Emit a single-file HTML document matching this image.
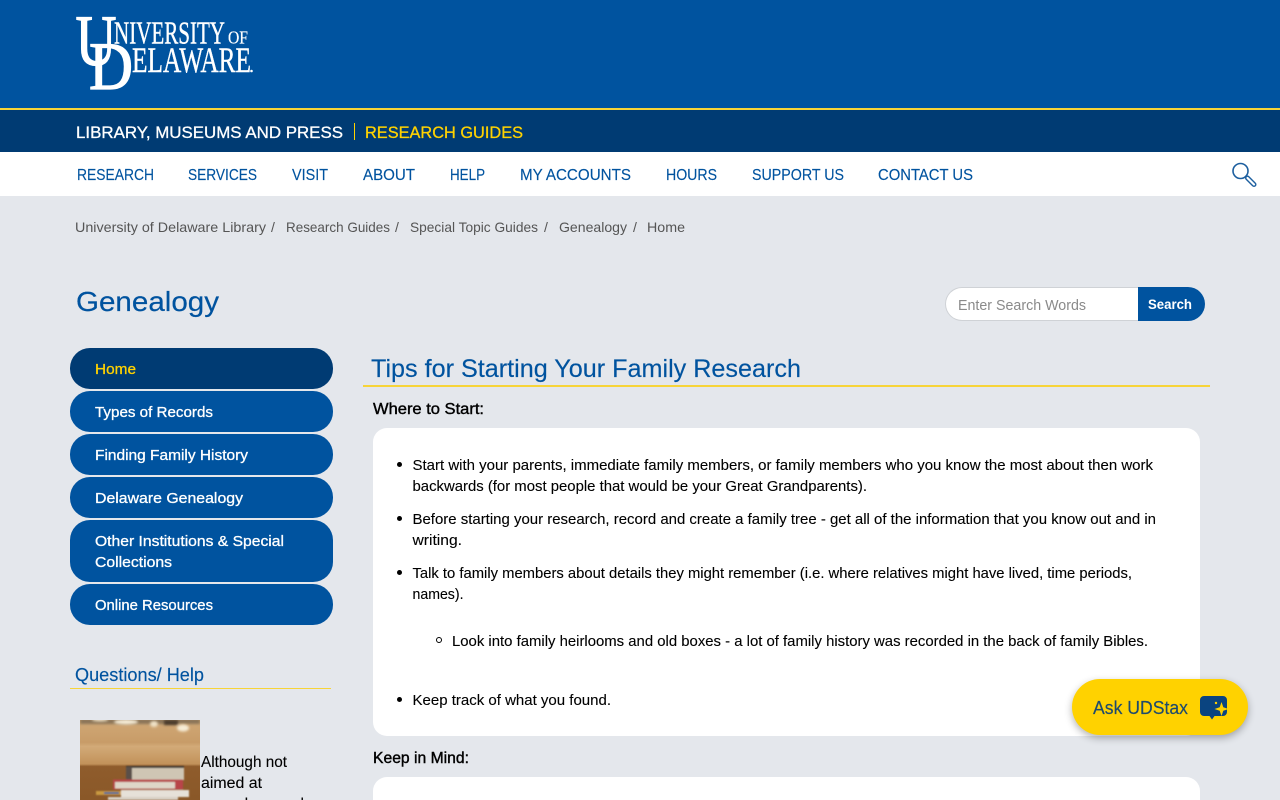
<!DOCTYPE html>
<html lang="en"><head><meta charset="utf-8"><title>Genealogy - Research Guides</title>
<style>
html,body{margin:0;padding:0;width:1280px;height:800px;overflow:hidden;background:#e4e7ec}
body{position:relative;font-family:"Liberation Sans",sans-serif}
.b{position:absolute;display:block}
svg.o{position:absolute;left:0;top:0}
text{font-family:"Liberation Sans",sans-serif}
text.s{font-family:"Liberation Serif",serif}
</style></head><body>
<div class="b" style="left:0;top:0;width:1280px;height:108px;background:#00539f"></div>
<div class="b" style="left:0;top:108px;width:1280px;height:2px;background:#f7d438"></div>
<div class="b" style="left:0;top:110px;width:1280px;height:42px;background:#003b73"></div>
<div class="b" style="left:0;top:152px;width:1280px;height:44px;background:#fff"></div>
<div class="b" style="left:354px;top:123px;width:1px;height:17px;background:#ffd200"></div>
<div class="b" style="left:945px;top:287px;width:193px;height:32px;background:#fff;border:1px solid #cfd2d6;border-right:0;border-radius:17px 0 0 17px"></div>
<div class="b" style="left:1138px;top:287px;width:67px;height:34px;background:#00539f;border-radius:0 17px 17px 0"></div>
<div class="b" style="left:70px;top:348px;width:263px;height:41px;background:#003b73;border-radius:20px"></div>
<div class="b" style="left:70px;top:391px;width:263px;height:41px;background:#00539f;border-radius:20px"></div>
<div class="b" style="left:70px;top:434px;width:263px;height:41px;background:#00539f;border-radius:20px"></div>
<div class="b" style="left:70px;top:477px;width:263px;height:41px;background:#00539f;border-radius:20px"></div>
<div class="b" style="left:70px;top:520px;width:263px;height:62px;background:#00539f;border-radius:20px"></div>
<div class="b" style="left:70px;top:584px;width:263px;height:41px;background:#00539f;border-radius:20px"></div>
<div class="b" style="left:70px;top:688px;width:261px;height:1px;background:#f7d438"></div>
<div class="b" style="left:363px;top:385px;width:847px;height:2px;background:#f7d438"></div>
<div class="b" style="left:373px;top:428px;width:827px;height:308px;background:#fff;border-radius:14px"></div>
<div class="b" style="left:373px;top:777px;width:827px;height:40px;background:#fff;border-radius:14px"></div>
<div class="b" style="left:397px;top:462px;width:5px;height:5px;background:#000;border-radius:50%"></div>
<div class="b" style="left:397px;top:516px;width:5px;height:5px;background:#000;border-radius:50%"></div>
<div class="b" style="left:397px;top:570px;width:5px;height:5px;background:#000;border-radius:50%"></div>
<div class="b" style="left:397px;top:697px;width:5px;height:5px;background:#000;border-radius:50%"></div>
<div class="b" style="left:436px;top:637px;width:4px;height:4px;border:1px solid #000;border-radius:50%"></div>
<div class="b" style="left:1072px;top:679px;width:176px;height:56px;background:#ffd200;border-radius:28px;box-shadow:0 3px 8px rgba(0,0,0,.3)"></div>

<svg class="o" width="1280" height="800" viewBox="0 0 1280 800" xmlns="http://www.w3.org/2000/svg">
<!-- logo -->
<g fill="#fff" stroke="#fff">
<text class="s" x="75.500" y="65" font-size="72" stroke-width="1.200" textLength="41" lengthAdjust="spacingAndGlyphs">U</text>
<text class="s" x="89" y="89" font-size="68" stroke-width="1.200" textLength="44" lengthAdjust="spacingAndGlyphs">D</text>
<text class="s" x="114" y="43.500" font-size="32" stroke-width=".4" textLength="111" lengthAdjust="spacingAndGlyphs">NIVERSITY</text>
<text class="s" x="228" y="43.500" font-size="18" stroke-width=".2" textLength="20" lengthAdjust="spacingAndGlyphs">OF</text>
<text class="s" x="132" y="72" font-size="36" stroke-width=".4" textLength="119" lengthAdjust="spacingAndGlyphs">ELAWARE</text>
<circle cx="251.500" cy="71" r="1.300" stroke="none"/>
</g>
<!-- blue bar -->
<g font-size="17" font-weight="500" stroke-width=".3">
<text x="76" y="138" fill="#fff" stroke="#fff" textLength="267" lengthAdjust="spacingAndGlyphs">LIBRARY, MUSEUMS AND PRESS</text>
<text x="365" y="138" fill="#ffd200" stroke="#ffd200" textLength="158" lengthAdjust="spacingAndGlyphs">RESEARCH GUIDES</text>
</g>
<!-- nav -->
<g font-size="16" fill="#00539f" stroke="#00539f" stroke-width=".15">
<text x="77" y="180" textLength="77" lengthAdjust="spacingAndGlyphs">RESEARCH</text>
<text x="188" y="180" textLength="69" lengthAdjust="spacingAndGlyphs">SERVICES</text>
<text x="292" y="180" textLength="36" lengthAdjust="spacingAndGlyphs">VISIT</text>
<text x="363" y="180" textLength="52" lengthAdjust="spacingAndGlyphs">ABOUT</text>
<text x="450" y="180" textLength="35" lengthAdjust="spacingAndGlyphs">HELP</text>
<text x="520" y="180" textLength="111" lengthAdjust="spacingAndGlyphs">MY ACCOUNTS</text>
<text x="666" y="180" textLength="51" lengthAdjust="spacingAndGlyphs">HOURS</text>
<text x="752" y="180" textLength="92" lengthAdjust="spacingAndGlyphs">SUPPORT US</text>
<text x="878" y="180" textLength="95" lengthAdjust="spacingAndGlyphs">CONTACT US</text>
</g>
<g fill="none">
<circle cx="1240.500" cy="171" r="7.500" stroke="#1d5f9f" stroke-width="1.600"/>
<path d="M1247.500 178l6.500 6.500" stroke="#1d5f9f" stroke-width="5" stroke-linecap="round"/>
<path d="M1247.500 178l6.500 6.500" stroke="#fff" stroke-width="2.200" stroke-linecap="round"/>
</g>
<!-- breadcrumb -->
<g font-size="14" fill="#555">
<text x="75" y="232" textLength="191" lengthAdjust="spacingAndGlyphs">University of Delaware Library</text>
<text x="271" y="232">/</text>
<text x="286" y="232" textLength="104" lengthAdjust="spacingAndGlyphs">Research Guides</text>
<text x="395" y="232">/</text>
<text x="410" y="232" textLength="128" lengthAdjust="spacingAndGlyphs">Special Topic Guides</text>
<text x="544" y="232">/</text>
<text x="559" y="232" textLength="68" lengthAdjust="spacingAndGlyphs">Genealogy</text>
<text x="633" y="232">/</text>
<text x="647" y="232" textLength="38" lengthAdjust="spacingAndGlyphs">Home</text>
</g>
<text x="76" y="311" font-size="28" fill="#00539f" stroke="#00539f" stroke-width=".2" textLength="143" lengthAdjust="spacingAndGlyphs">Genealogy</text>
<text x="958" y="310" font-size="14.500" fill="#8a8a8a" textLength="128" lengthAdjust="spacingAndGlyphs">Enter Search Words</text>
<text x="1148" y="309" font-size="14" font-weight="bold" fill="#fff" textLength="44" lengthAdjust="spacingAndGlyphs">Search</text>
<!-- side nav -->
<g font-size="15" fill="#fff" stroke="#fff" stroke-width=".3">
<text x="95" y="374" fill="#ffd200" stroke="#ffd200" textLength="41" lengthAdjust="spacingAndGlyphs">Home</text>
<text x="95" y="417" textLength="118" lengthAdjust="spacingAndGlyphs">Types of Records</text>
<text x="95" y="460" textLength="153" lengthAdjust="spacingAndGlyphs">Finding Family History</text>
<text x="95" y="503" textLength="148" lengthAdjust="spacingAndGlyphs">Delaware Genealogy</text>
<text x="95" y="546" textLength="189" lengthAdjust="spacingAndGlyphs">Other Institutions &amp; Special</text>
<text x="95" y="567" textLength="77" lengthAdjust="spacingAndGlyphs">Collections</text>
<text x="95" y="610" textLength="118" lengthAdjust="spacingAndGlyphs">Online Resources</text>
</g>
<text x="75" y="681" font-size="18.500" fill="#00539f" stroke="#00539f" stroke-width=".15" textLength="129" lengthAdjust="spacingAndGlyphs">Questions/ Help</text>
<!-- book photo -->
<defs>
<linearGradient id="w" x1="0" y1="0" x2="0" y2="1"><stop offset="0" stop-color="#d0a876"/><stop offset=".28" stop-color="#c89c68"/><stop offset=".33" stop-color="#d2aa78"/><stop offset=".55" stop-color="#c2925a"/><stop offset=".58" stop-color="#8f5c2c"/><stop offset="1" stop-color="#8a5828"/></linearGradient>
<filter id="bl" x="-20%" y="-20%" width="140%" height="140%"><feGaussianBlur stdDeviation=".7"/></filter>
<filter id="bl2" x="-30%" y="-100%" width="160%" height="300%"><feGaussianBlur stdDeviation="1.200"/></filter>
<clipPath id="ph"><rect x="80" y="720" width="120" height="80"/></clipPath>
</defs>
<g clip-path="url(#ph)">
<rect x="80" y="720" width="120" height="80" fill="url(#w)"/>
<rect x="80" y="719" width="120" height="5" fill="#8a7458" filter="url(#bl2)"/>
<g filter="url(#bl2)">
<ellipse cx="126" cy="722" rx="12" ry="2.500" fill="#f6ecd6"/><ellipse cx="183" cy="728" rx="6" ry="3.500" fill="#f6ecd6"/><ellipse cx="154" cy="724" rx="4" ry="3" fill="#f0e2c6"/><ellipse cx="100" cy="720" rx="8" ry="1.500" fill="#f0e2c6"/>
<rect x="164" y="720" width="14" height="5" fill="#4c3a2a"/>
</g>
<g filter="url(#bl)">
<rect x="126" y="767" width="58" height="13" fill="#cfc6b4"/><rect x="126" y="766" width="58" height="2" fill="#3f3a34"/>
<rect x="126" y="767" width="6" height="13" fill="#5a5048"/>
<rect x="113" y="779.500" width="70" height="10" fill="#b8454a"/><rect x="115" y="782" width="60" height="6.500" fill="#ded6c8"/>
<rect x="121" y="790" width="68" height="7" fill="#e6e1d8"/><rect x="96" y="791" width="25" height="4" fill="#c99a40"/><rect x="104" y="792" width="15" height="2" fill="#4a6a9a"/>
<rect x="108" y="797" width="70" height="3" fill="#d8d0c4"/>
</g>
</g>
<g font-size="15.500" fill="#000" stroke="#000" stroke-width=".1">
<text x="201" y="767" textLength="86" lengthAdjust="spacingAndGlyphs">Although not</text>
<text x="201" y="788" textLength="61" lengthAdjust="spacingAndGlyphs">aimed at</text>
<text x="201" y="809" textLength="103" lengthAdjust="spacingAndGlyphs">genealogy and</text>
</g>
<!-- main -->
<text x="371" y="377" font-size="25" fill="#00539f" stroke="#00539f" stroke-width=".15" textLength="430" lengthAdjust="spacingAndGlyphs">Tips for Starting Your Family Research</text>
<text x="373" y="414" font-size="16" fill="#000" stroke="#000" stroke-width=".4" textLength="111" lengthAdjust="spacingAndGlyphs">Where to Start:</text>
<text x="373" y="763" font-size="16" fill="#000" stroke="#000" stroke-width=".4" textLength="96" lengthAdjust="spacingAndGlyphs">Keep in Mind:</text>
<g font-size="14.500" fill="#000" stroke="#000" stroke-width=".1">
<text x="412.500" y="470" textLength="740.500" lengthAdjust="spacingAndGlyphs">Start with your parents, immediate family members, or family members who you know the most about then work</text>
<text x="412.500" y="491" textLength="454.500" lengthAdjust="spacingAndGlyphs">backwards (for most people that would be your Great Grandparents).</text>
<text x="412.500" y="524" textLength="743.500" lengthAdjust="spacingAndGlyphs">Before starting your research, record and create a family tree - get all of the information that you know out and in</text>
<text x="412.500" y="545" textLength="49.500" lengthAdjust="spacingAndGlyphs">writing.</text>
<text x="412.500" y="578" textLength="719.500" lengthAdjust="spacingAndGlyphs">Talk to family members about details they might remember (i.e. where relatives might have lived, time periods,</text>
<text x="412.500" y="599" font-size="14.500" textLength="51" lengthAdjust="spacingAndGlyphs">names).</text>
<text x="452" y="646" textLength="696" lengthAdjust="spacingAndGlyphs">Look into family heirlooms and old boxes - a lot of family history was recorded in the back of family Bibles.</text>
<text x="412.500" y="705" textLength="198.500" lengthAdjust="spacingAndGlyphs">Keep track of what you found.</text>
</g>
<!-- chat -->
<text x="1093" y="714" font-size="18" fill="#1d4a6e" stroke="#1d4a6e" stroke-width=".15" textLength="95" lengthAdjust="spacingAndGlyphs">Ask UDStax</text>
<path d="M1204 696h19a4 4 0 0 1 4 4v12a4 4 0 0 1-4 4h-8.500l-2.500 3.500-2.500-3.500h-5.500a4 4 0 0 1-4-4v-12a4 4 0 0 1 4-4z" fill="#0a4480"/>
<path d="M1221.500 702l1.800 5.200 5.200 1.800-5.200 1.800-1.800 5.200-1.800-5.200-5.200-1.800 5.200-1.800z" fill="#ffd200"/>
<circle cx="1216" cy="703" r="1.200" fill="#ffd200"/>
</svg>
</body></html>
